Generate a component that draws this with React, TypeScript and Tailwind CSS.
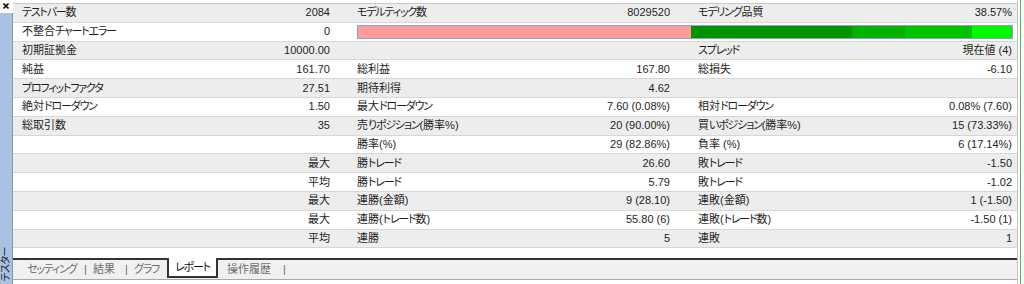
import React from "react";

type Pair = [string, string];

const rows: Pair[][] = [
  [["テストバー数", "2084"], ["モデルティック数", "8029520"], ["モデリング品質", "38.57%"]],
  [["不整合チャートエラー", "0"]],
  [["初期証拠金", "10000.00"], ["", ""], ["スプレッド", "現在値 (4)"]],
  [["純益", "161.70"], ["総利益", "167.80"], ["総損失", "-6.10"]],
  [["プロフィットファクタ", "27.51"], ["期待利得", "4.62"], ["", ""]],
  [["絶対ドローダウン", "1.50"], ["最大ドローダウン", "7.60 (0.08%)"], ["相対ドローダウン", "0.08% (7.60)"]],
  [["総取引数", "35"], ["売りポジション(勝率%)", "20 (90.00%)"], ["買いポジション(勝率%)", "15 (73.33%)"]],
  [["", ""], ["勝率(%)", "29 (82.86%)"], ["負率 (%)", "6 (17.14%)"]],
  [["", "最大"], ["勝トレード", "26.60"], ["敗トレード", "-1.50"]],
  [["", "平均"], ["勝トレード", "5.79"], ["敗トレード", "-1.02"]],
  [["", "最大"], ["連勝(金額)", "9 (28.10)"], ["連敗(金額)", "1 (-1.50)"]],
  [["", "最大"], ["連勝(トレード数)", "55.80 (6)"], ["連敗(トレード数)", "-1.50 (1)"]],
  [["", "平均"], ["連勝", "5"], ["連敗", "1"]],
];

const pads = ["pl-[9px] pr-[10px]", "pl-[17px] pr-[10px]", "pl-[18px] pr-[5px]"];

function JText({ t }: { t: string }) {
  const parts = t.split(/([\u3040-\u30FF]+)/);
  return (
    <>
      {parts.map((s, i) =>
        /^[\u3040-\u30FF]+$/.test(s) ? (
          <span key={i} className="tracking-[-1.2px]">
            {s}
          </span>
        ) : (
          <React.Fragment key={i}>{s}</React.Fragment>
        )
      )}
    </>
  );
}

function Cell({ p, i }: { p: Pair; i: number }) {
  return (
    <div className={`flex items-center justify-between whitespace-nowrap ${pads[i]}`}>
      <span>
        <JText t={p[0]} />
      </span>
      <span>{p[1]}</span>
    </div>
  );
}

export default function App() {
  return (
    <div className="w-[1024px] h-[284px] bg-white flex overflow-hidden text-[11px] leading-none text-[#1e1e1e] font-['Liberation_Sans','Noto_Sans_CJK_JP',sans-serif] [font-feature-settings:'palt']">
      {/* left sidebar */}
      <div className="w-[13px] h-full flex flex-col">
        <div className="h-[13px] flex items-start justify-start pl-[3px] pt-[3px]">
          <svg width="6" height="6" viewBox="0 0 6 6">
            <path d="M0.5 0.5 L5.5 5.5 M5.5 0.5 L0.5 5.5" stroke="#111" strokeWidth="1.6" />
          </svg>
        </div>
        <div className="flex-1 bg-[#a8c3e2] border-r border-[#8799b0] flex flex-col justify-end items-center pb-[2px]">
          <span className="[writing-mode:vertical-rl] [text-orientation:sideways] rotate-180 text-[10px] leading-none text-[#222] tracking-[-0.5px]">
            テスター
          </span>
        </div>
      </div>

      {/* main content */}
      <div className="w-[1005px] h-full flex flex-col border-r border-[#c4c4c4]">
        <div className="h-[3px] shrink-0" />
        <div className="border-t border-[#c8c8c8] shrink-0">
          {rows.map((r, idx) => (
            <div
              key={idx}
              className={`grid grid-cols-[327px_340px_337px] h-[18.8px] border-b border-[#d6d6d6] ${
                idx % 2 === 0 ? "bg-[#ededed]" : "bg-white"
              }`}
            >
              {idx === 1 ? (
                <>
                  <Cell p={r[0]} i={0} />
                  <div className="col-span-2 flex items-center pl-[17px] pr-[4px]">
                    <div className="flex-1 h-[14px] flex border border-[#8fa4c2]">
                      <div className="w-[333px] bg-[#ff9d9d]" />
                      <div className="w-[161px] bg-[#009400]" />
                      <div className="w-[53px] bg-[#00b300]" />
                      <div className="w-[67px] bg-[#00c400]" />
                      <div className="flex-1 bg-[#00f800]" />
                    </div>
                  </div>
                </>
              ) : (
                r.map((p, i) => <Cell key={i} p={p} i={i} />)
              )}
            </div>
          ))}
        </div>
        <div className="flex-1" />
        {/* tab strip */}
        <div className="h-[22px] shrink-0 flex bg-[#f0f0f0] border-b border-[#a8a8a8] text-[11px] text-[#6e6e6e] whitespace-nowrap">
          <div className="w-[14px] border-t-2 border-[#333]" />
          <div className="w-[57px] border-t-2 border-[#333] flex items-center">
            <JText t="セッティング" />
          </div>
          <div className="w-[9px] border-t-2 border-[#333] flex items-center">|</div>
          <div className="w-[32px] border-t-2 border-[#333] flex items-center">結果</div>
          <div className="w-[9px] border-t-2 border-[#333] flex items-center">|</div>
          <div className="w-[33px] border-t-2 border-[#333] flex items-center">
            <JText t="グラフ" />
          </div>
          <div className="w-[51px] h-[20px] bg-white border-x-2 border-b-2 border-[#333] flex items-center justify-center text-[#111]">
            <JText t="レポート" />
          </div>
          <div className="w-[65px] border-t-2 border-[#333] flex items-center pl-[9px]">操作履歴</div>
          <div className="w-[9px] border-t-2 border-[#333] flex items-center">|</div>
          <div className="flex-1 border-t-2 border-[#333]" />
        </div>
        <div className="h-[4px] shrink-0" />
      </div>

      {/* right edge */}
      <div className="w-[6px] h-full flex pl-[2px]">
        <div className="w-[1px] h-full bg-[#4fb463]" />
      </div>
    </div>
  );
}
